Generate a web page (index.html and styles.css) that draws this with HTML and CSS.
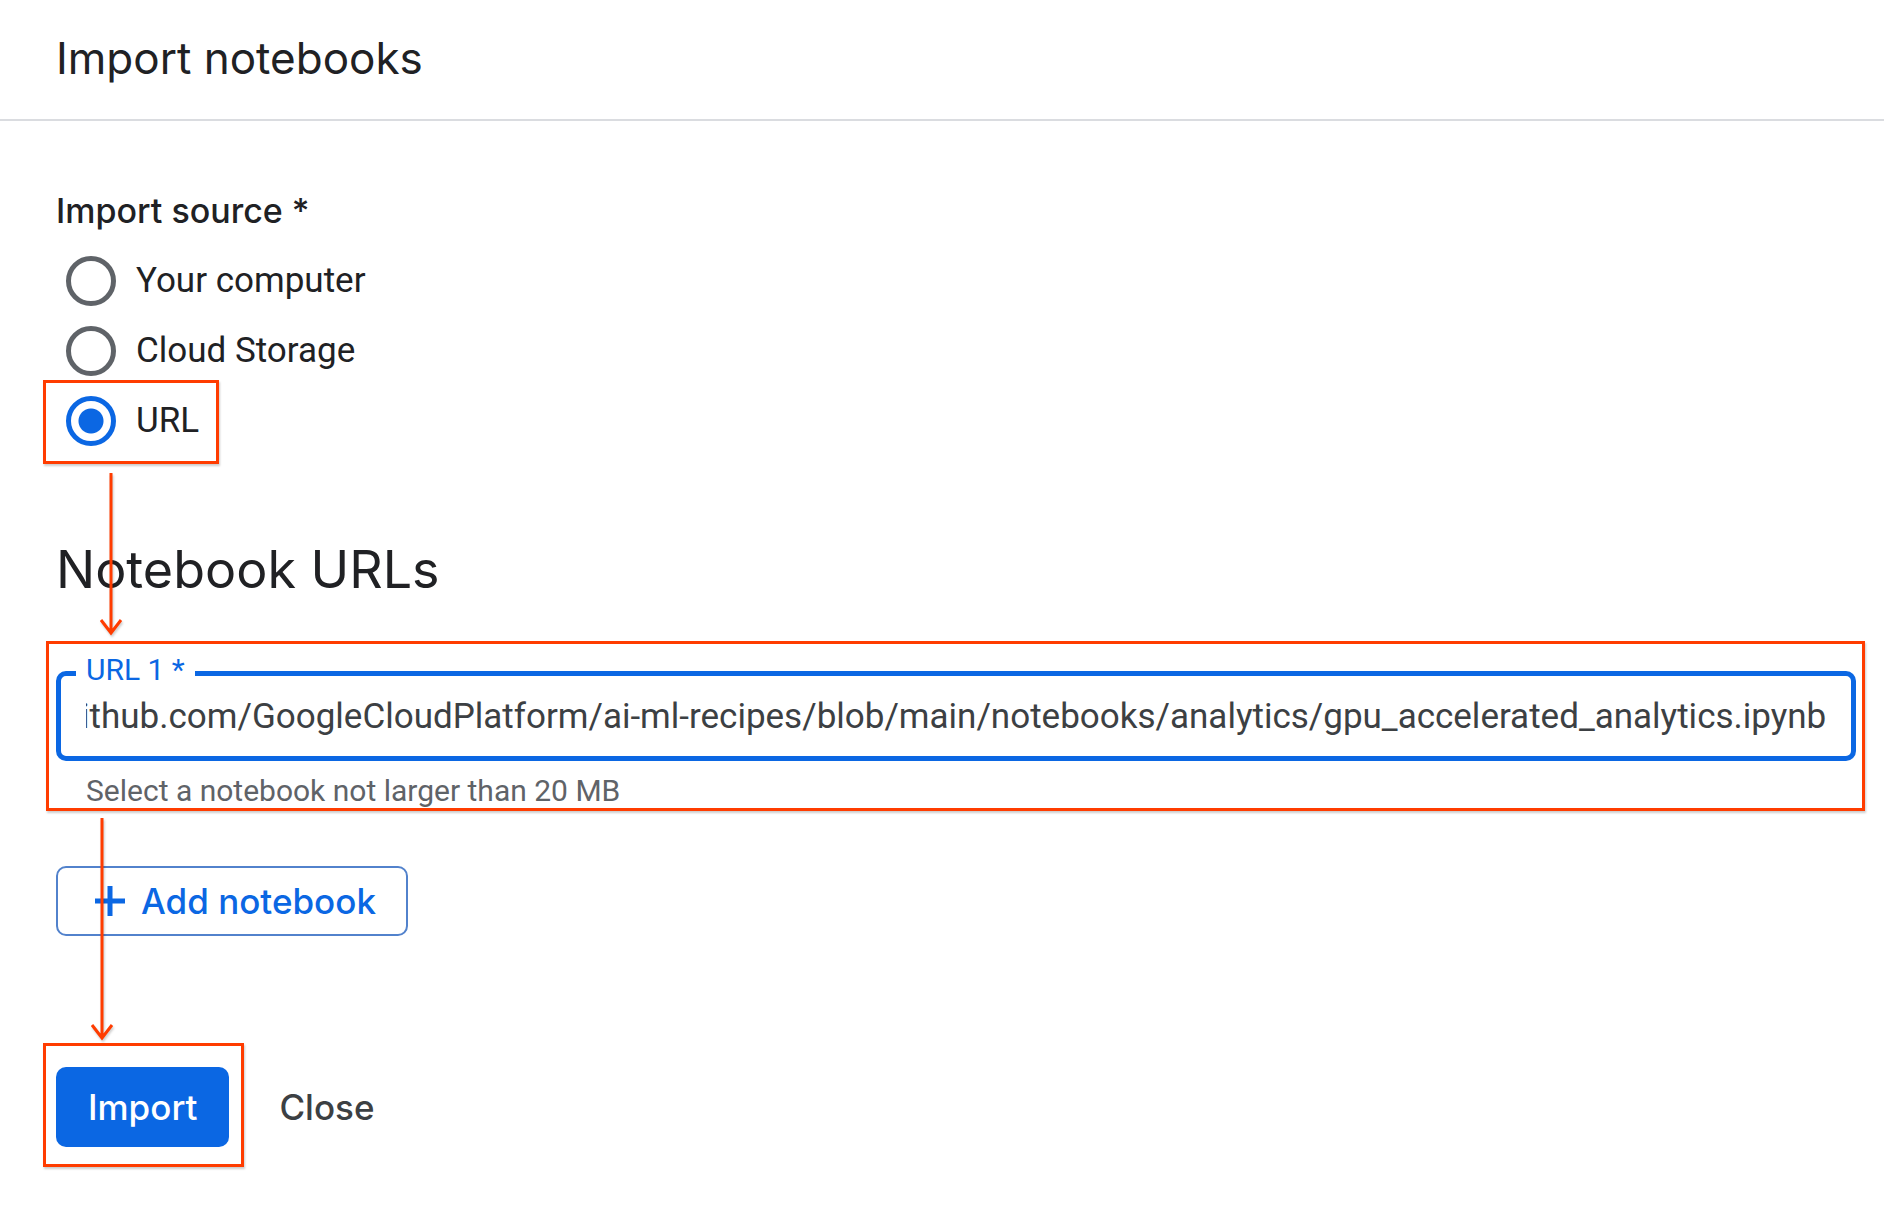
FILE: index.html
```html
<!DOCTYPE html>
<html lang="en">
<head>
  <meta charset="UTF-8">
  <meta name="viewport" content="width=device-width, initial-scale=1">
  <title>Import notebooks</title>
  <link rel="stylesheet" href="styles.css">
</head>
<body>

  <header class="header">
    <h1>Import notebooks</h1>
  </header>

  <form class="import-form">
    <fieldset class="source">
      <legend>Import source *</legend>
      <label class="option"><input type="radio" name="source"> Your computer</label>
      <label class="option"><input type="radio" name="source"> Cloud Storage</label>
      <label class="option step step-source">
        <input type="radio" name="source" checked> URL
        <svg class="arrow" width="24" height="164" viewBox="0 0 24 164">
          <path d="M12 0V160M2 147L12 160L22 147"/>
        </svg>
      </label>
    </fieldset>

    <h2>Notebook URLs</h2>

    <div class="field step step-url">
      <label for="url">URL 1 *</label>
      <input type="text" id="url" aria-describedby="hint" value="https://github.com/GoogleCloudPlatform/ai-ml-recipes/blob/main/notebooks/analytics/gpu_accelerated_analytics.ipynb">
      <p id="hint">Select a notebook not larger than 20 MB</p>
      <svg class="arrow" width="24" height="224" viewBox="0 0 24 224">
        <path d="M12 0V220M2 207L12 220L22 207"/>
      </svg>
    </div>

    <button type="button" class="add">
      <svg width="32" height="32" viewBox="0 0 32 32">
        <path d="M16 1V31M1 16H31"/>
      </svg>
      Add notebook
    </button>

    <div class="actions">
      <div class="step step-import">
        <button type="submit" class="import">Import</button>
      </div>
      <button type="button" class="close">Close</button>
    </div>
  </form>

  <script>
    // show the end of the long address
    const url = document.getElementById("url");
    url.scrollLeft = url.scrollWidth;
  </script>

</body>
</html>
```
FILE: styles.css
```css
* {
  box-sizing: border-box;
}

body {
  margin: 0;
  background: white;
  color: #202124;
  font-family: Roboto, sans-serif;
  font-size: 35px;
  line-height: 40px;
}

h1, h2, legend, button {
  font-family: Inter, sans-serif;
}

.header {
  padding: 30px 56px 33px;
  border-bottom: 2px solid #dadce0;
}

h1 {
  margin: 0;
  font-size: 44px;
  font-weight: 400;
  line-height: 56px;
}

.import-form {
  padding: 70px 28px 40px 56px;
}

.source {
  margin: 0;
  padding: 0;
  border: none;
}

legend {
  padding: 0;
  margin-bottom: 25px;
  font-size: 34px;
  font-weight: 500;
}

.option {
  display: flex;
  align-items: center;
  gap: 20px;
  width: fit-content;
  height: 50px;
  margin: 0 0 20px 10px;
}

.option input {
  appearance: none;
  width: 50px;
  height: 50px;
  margin: 0;
  border: 5px solid #5f6368;
  border-radius: 50%;
}

.option input:checked {
  border-color: #0b67e3;
  background: radial-gradient(circle, #0b67e3 12px, white 13px);
}

h2 {
  margin: 72px 0 69px;
  font-size: 52px;
  font-weight: 400;
  line-height: 64px;
}

.field label {
  position: absolute;
  top: -21px;
  left: 20px;
  padding: 0 10px;
  background: white;
  color: #0b67e3;
  font-size: 30px;
}

.field input {
  display: block;
  width: 100%;
  height: 90px;
  padding: 0 25px;
  border: 5px solid #0b67e3;
  border-radius: 10px;
  background: white;
  color: #3c4043;
  font: inherit;
}

.field p {
  margin: 10px 30px 0;
  color: #5f6368;
  font-size: 30px;
}

button {
  border: none;
  border-radius: 10px;
  background: white;
  font-size: 35px;
  font-weight: 500;
  cursor: pointer;
}

.add {
  display: flex;
  align-items: center;
  gap: 15px;
  height: 70px;
  margin-top: 55px;
  padding: 0 30px 0 36px;
  border: 2px solid #5282cc;
  color: #0b67e3;
}

.add svg {
  fill: none;
  stroke: #0b67e3;
  stroke-width: 5;
}

.actions {
  display: flex;
  gap: 18px;
  margin-top: 131px;
}

.actions button {
  height: 80px;
  padding: 0 32px;
}

.actions .import {
  background: #0b67e3;
  color: white;
}

.close {
  color: #3c4043;
}

/* red walkthrough marks drawn over the form */
.step {
  position: relative;
}

.step::after {
  content: "";
  position: absolute;
  border: 3px solid #ff3c00;
  box-shadow: 1px 2px 2px rgba(0,0,0,0.2);
  pointer-events: none;
}

.step-source::after {
  inset: -16px -20px -18px -23px;
}

.step-url::after {
  inset: -30px -9px 0 -10px;
}

.step-import::after {
  inset: -24px -15px -20px -13px;
}

.arrow {
  position: absolute;
  z-index: 1;
  fill: none;
  stroke: #ff3c00;
  stroke-width: 3;
  filter: drop-shadow(1px 2px 1px rgba(0,0,0,0.2));
  pointer-events: none;
}

.step-source .arrow {
  top: 77px;
  left: 33px;
}

.step-url .arrow {
  top: 147px;
  left: 34px;
}
```
